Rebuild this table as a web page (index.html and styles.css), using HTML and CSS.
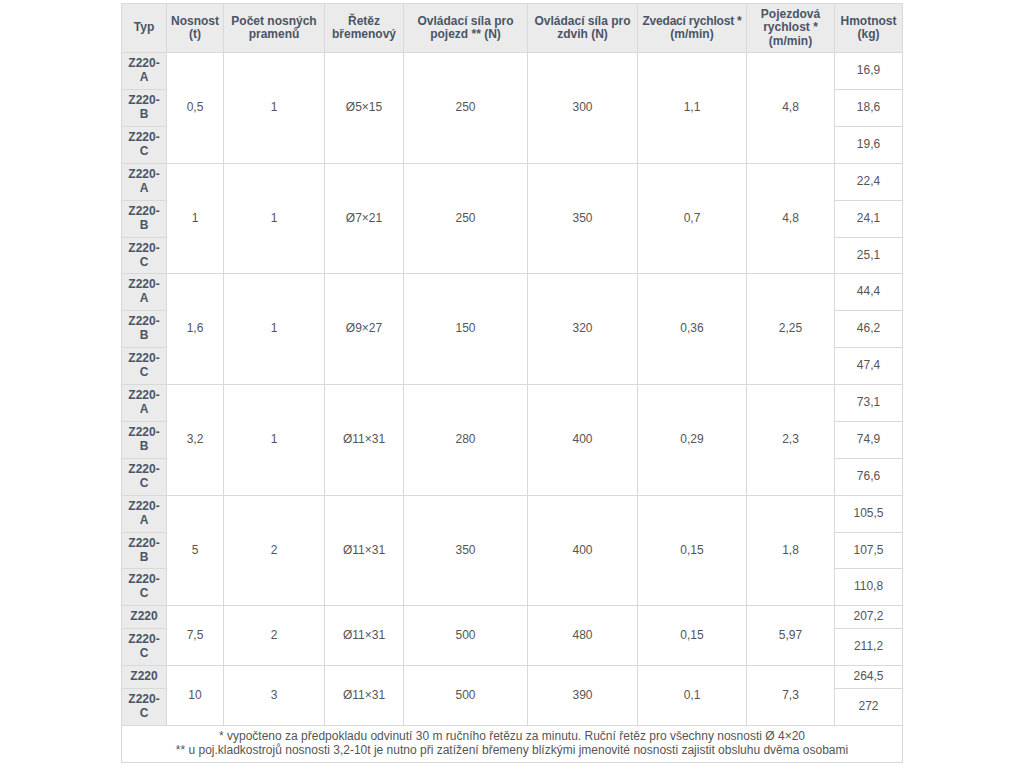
FILE: index.html
```html
<!DOCTYPE html>
<html lang="cs">
<head>
<meta charset="utf-8">
<title>Z220</title>
<link rel="stylesheet" href="styles.css">
</head>
<body>
<table class="spec">
<colgroup>
<col class="c1"><col class="c2"><col class="c3"><col class="c4"><col class="c5"><col class="c6"><col class="c7"><col class="c8"><col class="c9">
</colgroup>
<thead>
<tr>
<th>Typ</th>
<th>Nosnost (t)</th>
<th>Počet nosných pramenů</th>
<th>Řetěz břemenový</th>
<th>Ovládací síla pro pojezd ** (N)</th>
<th>Ovládací síla pro zdvih (N)</th>
<th><span class="nw">Zvedací rychlost&nbsp;*</span> (m/min)</th>
<th>Pojezdová rychlost * (m/min)</th>
<th>Hmotnost (kg)</th>
</tr>
</thead>
<tbody>
<tr><th class="typ">Z220-A</th><td rowspan="3">0,5</td><td rowspan="3">1</td><td rowspan="3">Ø5×15</td><td rowspan="3">250</td><td rowspan="3">300</td><td rowspan="3">1,1</td><td rowspan="3">4,8</td><td>16,9</td></tr>
<tr><th class="typ">Z220-B</th><td>18,6</td></tr>
<tr><th class="typ">Z220-C</th><td>19,6</td></tr>

<tr><th class="typ">Z220-A</th><td rowspan="3">1</td><td rowspan="3">1</td><td rowspan="3">Ø7×21</td><td rowspan="3">250</td><td rowspan="3">350</td><td rowspan="3">0,7</td><td rowspan="3">4,8</td><td>22,4</td></tr>
<tr><th class="typ">Z220-B</th><td>24,1</td></tr>
<tr><th class="typ">Z220-C</th><td>25,1</td></tr>

<tr><th class="typ">Z220-A</th><td rowspan="3">1,6</td><td rowspan="3">1</td><td rowspan="3">Ø9×27</td><td rowspan="3">150</td><td rowspan="3">320</td><td rowspan="3">0,36</td><td rowspan="3">2,25</td><td>44,4</td></tr>
<tr><th class="typ">Z220-B</th><td>46,2</td></tr>
<tr><th class="typ">Z220-C</th><td>47,4</td></tr>

<tr><th class="typ">Z220-A</th><td rowspan="3">3,2</td><td rowspan="3">1</td><td rowspan="3">Ø11×31</td><td rowspan="3">280</td><td rowspan="3">400</td><td rowspan="3">0,29</td><td rowspan="3">2,3</td><td>73,1</td></tr>
<tr><th class="typ">Z220-B</th><td>74,9</td></tr>
<tr><th class="typ">Z220-C</th><td>76,6</td></tr>

<tr><th class="typ">Z220-A</th><td rowspan="3">5</td><td rowspan="3">2</td><td rowspan="3">Ø11×31</td><td rowspan="3">350</td><td rowspan="3">400</td><td rowspan="3">0,15</td><td rowspan="3">1,8</td><td>105,5</td></tr>
<tr><th class="typ">Z220-B</th><td>107,5</td></tr>
<tr><th class="typ">Z220-C</th><td>110,8</td></tr>

<tr><th class="typ">Z220</th><td rowspan="2">7,5</td><td rowspan="2">2</td><td rowspan="2">Ø11×31</td><td rowspan="2">500</td><td rowspan="2">480</td><td rowspan="2">0,15</td><td rowspan="2">5,97</td><td>207,2</td></tr>
<tr><th class="typ">Z220-C</th><td>211,2</td></tr>

<tr><th class="typ">Z220</th><td rowspan="2">10</td><td rowspan="2">3</td><td rowspan="2">Ø11×31</td><td rowspan="2">500</td><td rowspan="2">390</td><td rowspan="2">0,1</td><td rowspan="2">7,3</td><td>264,5</td></tr>
<tr><th class="typ">Z220-C</th><td>272</td></tr>

<tr><td colspan="9" class="note">* vypočteno za předpokladu odvinutí 30 m ručního řetězu za minutu. Ruční řetěz pro všechny nosnosti Ø 4×20<br>** u poj.kladkostrojů nosnosti 3,2-10t je nutno při zatížení břemeny blízkými jmenovité nosnosti zajistit obsluhu dvěma osobami</td></tr>
</tbody>
</table>
</body>
</html>
```

FILE: styles.css
```css
html, body {
  margin: 0;
  padding: 0;
  background: #ffffff;
}

body {
  font-family: "Liberation Sans", Arial, sans-serif;
  font-size: 12px;
  color: #555555;
}

.spec {
  border-collapse: collapse;
  table-layout: fixed;
  width: 781px;
  margin: 3px 0 0 121px;
}

.c1 { width: 45px; }
.c2 { width: 57px; }
.c3 { width: 101px; }
.c4 { width: 79px; }
.c5 { width: 124px; }
.c6 { width: 110px; }
.c7 { width: 109px; }
.c8 { width: 88px; }
.c9 { width: 68px; }

.spec th,
.spec td {
  border: 1px solid #d9d9d9;
  padding: 4px;
  text-align: center;
  vertical-align: middle;
  line-height: 13.93px;
}

.spec thead th {
  background: #ebebeb;
  color: #4a5566;
  font-weight: bold;
  line-height: 13.4px;
}

.nw {
  white-space: nowrap;
  letter-spacing: -0.2px;
}

.spec th.typ {
  background: #ebebeb;
  color: #4a5566;
  font-weight: bold;
}

.spec td {
  color: #555555;
  font-weight: normal;
}

.spec td.note {
  color: #555555;
  padding: 4px;
}
```
